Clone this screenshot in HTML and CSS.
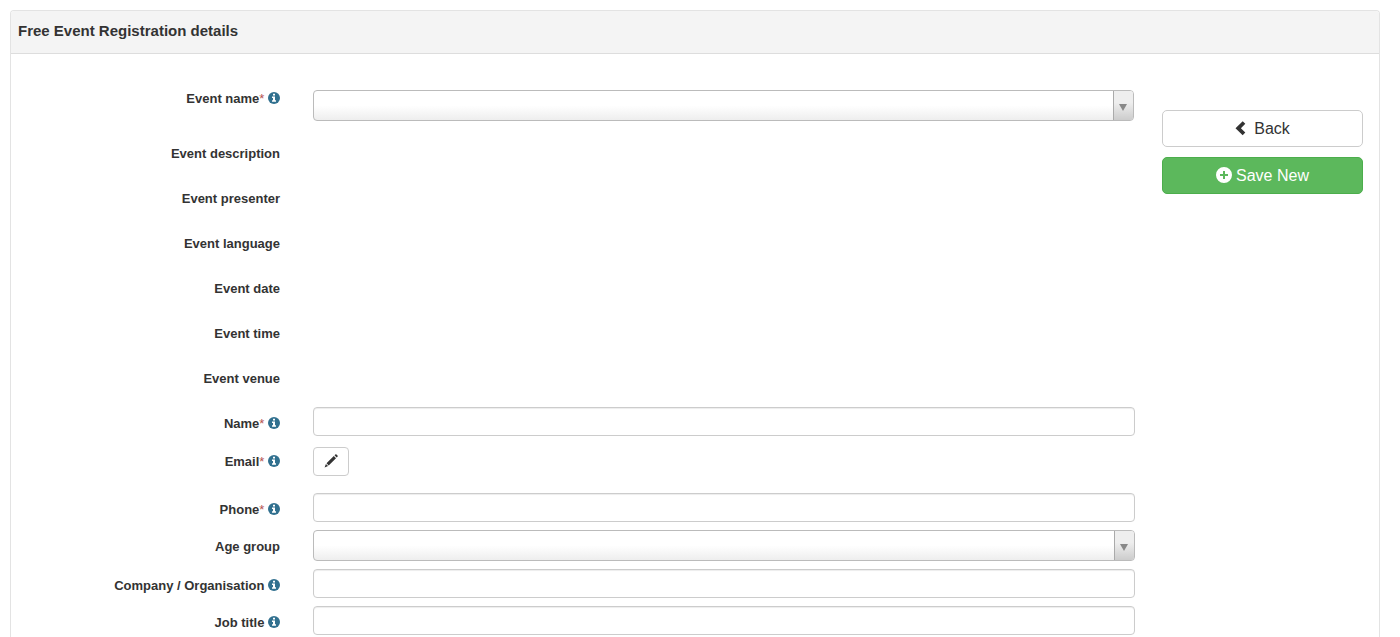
FILE: index.html
```html
<!DOCTYPE html>
<html lang="en">
<head>
<meta charset="utf-8">
<title>Free Event Registration details</title>
<link rel="stylesheet" href="styles.css">
</head>
<body>
<svg class="sprite" aria-hidden="true">
  <symbol id="info" viewBox="0 0 12 12">
    <circle cx="6" cy="6" r="6" fill="#31708f"/>
    <path fill="#fff" d="M5 1.700h2v1.700H5zM4 4.500h3v3.800h1v1.500H4V8.300h1V6H4z"/>
  </symbol>
  <symbol id="pencil" viewBox="0 0 14 14">
    <path fill="currentColor" d="M10.500 1.300l.8-.8q.6-.5 1.200 0l1 1q.5.600 0 1.200l-.8.8zM9.800 2l2.200 2.200-7.300 7.300-2.200-2.200zM1.900 9.900l2.200 2.200L.6 13.400z"/>
  </symbol>
  <symbol id="chevron" viewBox="0 0 11 15">
    <path fill="currentColor" d="M7.700.2l2.600 2.600L5.900 7.200l4.400 4.400-2.600 2.600L.5 7.200z"/>
  </symbol>
  <symbol id="plus" viewBox="0 0 16 16">
    <path fill="currentColor" fill-rule="evenodd" d="M8 0a8 8 0 1 1 0 16A8 8 0 0 1 8 0zM7 4v3H4v2h3v3h2V9h3V7H9V4z"/>
  </symbol>
</svg>
<main class="panel">
  <header class="panel-heading"><h1 class="panel-title">Free Event Registration details</h1></header>
  <div class="panel-body">
    <form class="form" id="registration">
      <div class="row row-first">
        <label class="label" for="event">Event name<span class="required">*</span> <svg class="info"><use href="#info"/></svg></label>
        <div class="picker"><select class="select" id="event"><option></option></select></div>
      </div>
      <dl class="details">
        <div class="detail"><dt class="label">Event description</dt><dd></dd></div>
        <div class="detail"><dt class="label">Event presenter</dt><dd></dd></div>
        <div class="detail"><dt class="label">Event language</dt><dd></dd></div>
        <div class="detail"><dt class="label">Event date</dt><dd></dd></div>
        <div class="detail"><dt class="label">Event time</dt><dd></dd></div>
        <div class="detail"><dt class="label">Event venue</dt><dd></dd></div>
      </dl>
      <div class="row">
        <label class="label" for="name">Name<span class="required">*</span> <svg class="info"><use href="#info"/></svg></label>
        <input class="input" id="name" type="text">
      </div>
      <div class="row row-email">
        <label class="label" for="email">Email<span class="required">*</span> <svg class="info"><use href="#info"/></svg></label>
        <button class="edit" id="email" type="button" aria-label="Edit email"><svg class="pencil"><use href="#pencil"/></svg></button>
      </div>
      <div class="row">
        <label class="label" for="phone">Phone<span class="required">*</span> <svg class="info"><use href="#info"/></svg></label>
        <input class="input" id="phone" type="text">
      </div>
      <div class="row">
        <label class="label" for="age">Age group</label>
        <div class="picker"><select class="select" id="age"><option></option></select></div>
      </div>
      <div class="row">
        <label class="label" for="company">Company / Organisation <svg class="info"><use href="#info"/></svg></label>
        <input class="input" id="company" type="text">
      </div>
      <div class="row">
        <label class="label" for="job">Job title <svg class="info"><use href="#info"/></svg></label>
        <input class="input" id="job" type="text">
      </div>
    </form>
    <aside class="actions">
      <button class="btn" type="button"><svg class="chevron"><use href="#chevron"/></svg>Back</button>
      <button class="btn btn-save" type="submit" form="registration"><svg class="plus"><use href="#plus"/></svg>Save New</button>
    </aside>
  </div>
</main>
</body>
</html>
```
FILE: styles.css
```css
* {
  box-sizing: border-box;
}

body {
  display: flex;
  flex-direction: column;
  min-height: 100vh;
  margin: 0;
  padding: 10px 20px 0 10px;
  background: #fff;
  color: #333;
  font: 13px/18px "Liberation Sans", Arial, sans-serif;
}

.sprite {
  display: none;
}

.panel {
  flex: 1;
  border: 1px solid #e3e3e3;
  border-bottom: 0;
  border-radius: 4px 4px 0 0;
}

.panel-heading {
  padding: 10px 7px 12px;
  border-bottom: 1px solid #ddd;
  border-radius: 3px 3px 0 0;
  background: #f4f4f4;
}

.panel-title {
  margin: 0;
  font-size: 15px;
  line-height: 20px;
}

.panel-body {
  display: flex;
  gap: 27px;
  padding: 36px 16px 0 0;
}

.form {
  display: flex;
  flex: 1;
  flex-direction: column;
  gap: 8px;
}

.row,
.detail {
  display: grid;
  grid-template-columns: 269px 1fr;
  column-gap: 33px;
}

.label {
  padding-top: 8px;
  font-weight: bold;
  text-align: right;
}

.row-first {
  padding-right: 1px;
}

.row-first .label {
  padding-top: 0;
}

.required {
  color: #b5524f;
  font-weight: normal;
}

.info {
  width: 12px;
  height: 12px;
  vertical-align: -1px;
}

.details {
  margin: 2px 0 -2px;
}

.detail {
  align-items: center;
  height: 45px;
}

.detail .label {
  padding-top: 0;
}

.input {
  width: 100%;
  height: 29px;
  padding: 4px 10px;
  border: 1px solid #ccc;
  border-radius: 4px;
  background: #fff;
  box-shadow: inset 0 1px 1px rgba(0, 0, 0, 0.075);
  color: inherit;
  font: inherit;
}

.picker {
  position: relative;
}

.select {
  display: block;
  width: 100%;
  height: 31px;
  padding: 0 28px 0 8px;
  appearance: none;
  border: 1px solid #bbb;
  border-radius: 4px;
  background: linear-gradient(#fff 50%, #eee);
  color: inherit;
  font: inherit;
}

.picker::before {
  position: absolute;
  top: 1px;
  right: 1px;
  bottom: 1px;
  width: 19px;
  border-left: 1px solid #aaa;
  border-radius: 0 3px 3px 0;
  background: linear-gradient(#eee 40%, #ccc);
  content: "";
  pointer-events: none;
}

.picker::after {
  position: absolute;
  top: 14px;
  right: 7px;
  width: 8px;
  height: 7px;
  background: #888;
  clip-path: polygon(0 0, 100% 0, 50% 100%);
  content: "";
  pointer-events: none;
}

.row-email {
  margin: 3px 0 9px;
}

.row-email .label {
  padding-top: 6px;
}

.edit {
  display: flex;
  align-items: center;
  justify-content: center;
  width: 36px;
  height: 29px;
  padding: 0 0 2px;
  border: 1px solid #ccc;
  border-radius: 4px;
  background: #fff;
  color: #333;
}

.pencil {
  width: 14px;
  height: 14px;
}

.actions {
  display: flex;
  flex: 0 0 201px;
  flex-direction: column;
  gap: 10px;
  padding-top: 20px;
}

.btn {
  display: flex;
  align-items: center;
  justify-content: center;
  height: 37px;
  padding: 0 16px;
  border: 1px solid #ccc;
  border-radius: 5px;
  background: #fff;
  color: #333;
  font: 16px/22px "Liberation Sans", Arial, sans-serif;
}

.btn-save {
  border-color: #4cae4c;
  background: #5cb85c;
  color: #fff;
}

.chevron {
  width: 11px;
  height: 15px;
  margin-right: 8px;
}

.plus {
  width: 16px;
  height: 16px;
  margin: 0 4px 2px 0;
}
```
